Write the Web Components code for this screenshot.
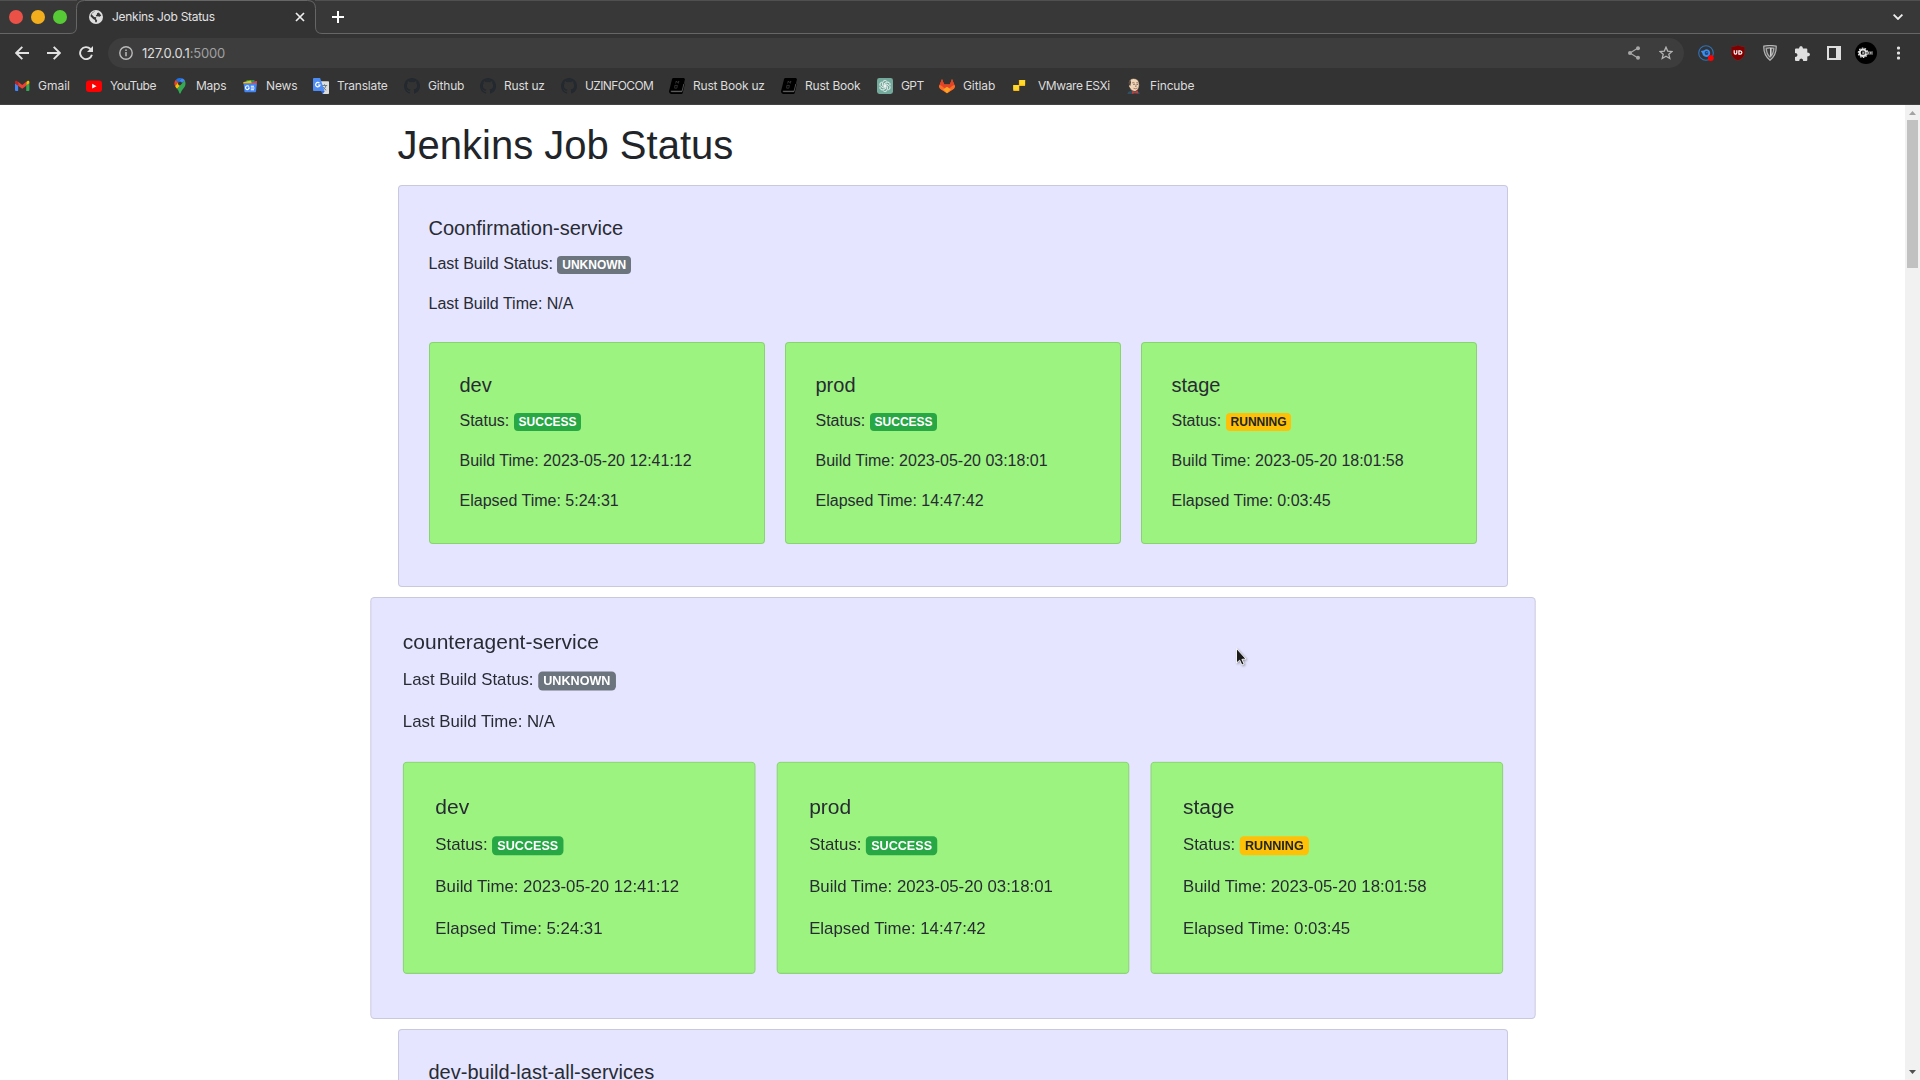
<!DOCTYPE html>
<html lang="en">
<head>
<meta charset="utf-8">
<title>Jenkins Job Status</title>
<style>
html,body{margin:0;height:100%;overflow:hidden;background:#fff}
</style>
</head>
<body>
<app-window></app-window>
<script>
const define = (name, html, setup) => {
  const t = document.createElement('template');
  t.innerHTML = html;
  customElements.define(name, class extends HTMLElement {
    connectedCallback() {
      if (this.shadowRoot) return;
      this.attachShadow({ mode: 'open' }).append(t.content.cloneNode(true));
      if (setup) setup.call(this, this.shadowRoot);
    }
  });
};

const octocat = '<path fill="#24292f" d="M8 0C3.58 0 0 3.58 0 8c0 3.54 2.29 6.53 5.47 7.59.4.07.55-.17.55-.38v-1.34c-2.23.48-2.7-1.07-2.7-1.07-.36-.92-.89-1.17-.89-1.17-.73-.5.05-.49.05-.49.81.06 1.23.83 1.23.83.72 1.23 1.88.87 2.34.67.07-.52.28-.88.51-1.08-1.78-.2-3.64-.89-3.64-3.95 0-.87.31-1.59.82-2.15-.08-.2-.36-1.02.08-2.12 0 0 .67-.21 2.2.82a7.6 7.6 0 0 1 4 0c1.53-1.04 2.2-.82 2.2-.82.44 1.1.16 1.92.08 2.12.51.56.82 1.27.82 2.15 0 3.07-1.87 3.75-3.65 3.95.29.25.54.73.54 1.48v2.19c0 .21.15.46.55.38A8 8 0 0 0 8 0z"/>';
const book = '<path fill="#000" d="M4.3 0H14.6Q16 .2 15.9 1.4L13.2 12.6H2.6Q1.4 12.8 1.6 13.6Q1.8 14.3 2.8 14.3H12.9L15.3 5.4L15.9 6L13.7 15Q13.4 15.9 12.4 15.9H2Q0 15.6 0 13.6Q0 12.9.4 11.8L3 1.2Q3.3.1 4.3 0z"/><path fill="none" stroke="#777" stroke-width=".6" d="M2.2 13.5H13L14.8 6"/><path fill="none" stroke="#444" stroke-width=".7" d="M6.6 5.5L7.3 3l1 1.5 1.6-1.4L9.3 5.6M5.8 7.4h2.6l-.6 2.8H5.7z"/>';
const petal = [0, 60, 120, 180, 240, 300].map(a => `<path d="M8 8.9L5.6 7.5V4.9A2.4 2.4 0 0 1 9.8 3.3" transform="rotate(${a} 8 8)"/>`).join('');
const ICONS = {
  gmail: '<g transform="translate(1 .8) scale(.9)"><path fill="#4285f4" d="M1 13.5h2.5V7.5L0 5v7.4q0 1.1 1 1.1z"/><path fill="#34a853" d="M12.5 13.5H15q1 0 1-1.1V5l-3.5 2.5z"/><path fill="#fbbc04" d="M12.5 3.5v4L16 5V3.8c0-1.6-1.5-2-2.4-1.2z"/><path fill="#ea4335" d="M3.5 7.6V3.4L8 6.8l4.5-3.4v4.2L8 11z"/><path fill="#c5221f" d="M0 3.8V5l3.5 2.6V3.4L2.4 2.6C1.4 1.9 0 2.3 0 3.8z"/></g>',
  youtube: '<rect y="2.4" width="16" height="11.6" rx="3" fill="#f00"/><path fill="#fff" d="M6.2 5.8v4.800l4.300-2.400z"/>',
  maps: '<path fill="#1a73e8" d="M9.8.3A5.6 5.6 0 0 0 3.6 2L6.2 4.2z"/><path fill="#ea4335" d="M3.6 2a5.5 5.5 0 0 0-.5 6L6.1 4.3z"/><path fill="#4285f4" d="M8 3.5q1.7 0 2 1.6L13 2.5A6 6 0 0 0 9.8.3L6 4.5Q6.8 3.5 8 3.5z"/><path fill="#fbbc04" d="M3.1 8Q3.8 9.4 5 10.8L9.7 7Q8 8.4 6.6 7 5.5 5.7 6.3 4.2z"/><path fill="#34a853" d="M5 10.8Q6.6 12.4 7.2 14.8 8 16.8 8.8 14.8C10 11.2 13.5 9.8 13.5 5.6Q13.5 3.8 12.8 2.4z"/>',
  news: '<path fill="#0c9d58" d="M4.500 2h8v5h-8z"/><path fill="#ea4335" d="M9 4l5.400-.9q.8 0 .6.900L14 9 9 8z"/><path fill="#fbbc04" d="M1.800 4L9 2.600l1.200 5H2.600L1.200 5q0-.8.600-1z"/><path fill="#4285f4" d="M2.400 5.200h11.800q.7 0 .6.700L14 13.600q-.1.700-.8.700H3.200q-.7 0-.8-.7L1.700 6q0-.7.700-.8z"/><path fill="none" stroke="#fff" stroke-width="1.100" d="M7 8.600A1.900 1.900 0 1 0 7.300 10H6M8.800 8.200h3.200M8.800 10h3.700M8.800 11.800h3.200"/>',
  translate: '<path fill="#ddd" d="M7 3.2h8.2q.8 0 .8.8v11.2q0 .8-.8.8H9.8z"/><path stroke="#6b7d88" fill="none" d="M9 7.5h5.2M11.5 6.3v1.2M13 7.6q-.8 2.800-3 4.600M10.200 9q1 2 3 3.200"/><path fill="#3367d6" d="M7.800 13h4l-2 3z"/><path fill="#4d8cf5" d="M.9 0h6.200L11.500 13H.9Q0 13 0 12V1q0-1 .9-1z"/><path fill="none" stroke="#fff" stroke-width="1.200" d="M6.500 5.200A2.200 2.200 0 1 0 7 7H5"/>',
  github: octocat, book,
  gpt: '<rect width="16" height="16" rx="2.400" fill="#74aa9c"/><g fill="none" stroke="#fff" stroke-width=".8">' + petal + '</g>',
  gitlab: '<path fill="#fc6d26" d="M0 8.500L3 .9 5.100 6.400h5.800L13 .9l3 7.600-1 2L8 15.200 1 10.500z"/><path fill="#e24329" d="M3 .9L5.100 6.400h5.800L13 .9l2.400 6L8 15.200.6 6.900z"/><path fill="#fc6d26" d="M.6 6.900q4 .4 7.400 8.300Q11.400 7.300 15.400 6.900L16 8.500 15 10.700 8 15.200 1 10.700 0 8.500z"/><path fill="#fca326" d="M4.200 11.300L8 8.800l3.800 2.500L8 15.200z"/>',
  vmware: '<g transform="translate(-.7 0)"><rect x="5.600" y="2" width="6.200" height="6" rx=".6" fill="#fdb913"/><rect x="6.200" y="2" width="5.600" height="4.800" rx=".5" fill="#ffda2b"/><rect y="7" width="6" height="6" rx=".6" fill="#fdb913"/><rect width="5.600" y="7" height="4.800" rx=".5" fill="#ffda2b"/></g>',
  jenkins: '<path fill="#2f5060" d="M1.500 16q0-2.500 3-3l7 .2q2.500.6 2.300 2.800z"/><path fill="#f1d5b8" stroke="#3b3028" stroke-width=".6" d="M3 7Q1.800 1 7.500.5 13.500.6 13.200 7q0 5-4.200 6.600Q5 13.200 4 10.200 2.400 9 3 7z"/><path fill="#51443c" d="M3 6.500Q2.500 3 4.500 1.800L5 4.500 4.300 8z"/><path fill="#333" d="M7.400 5.800h1.200v1H7.400zM10.600 5.800h1.200v1h-1.200z"/><path stroke="#7a4a3a" stroke-width=".6" fill="none" d="M6 5q1.200-1 2.600-.2M10.200 4.800q1-.8 2 0M9.800 6.500l.4 2h-1M7.500 10.300q2 1 4-.3"/><path fill="#d33833" d="M6 13l2.500 1 3.300-1.400.5 3-3.600-.8L6 16z"/>'
};

define('ui-icon', '<style>:host{display:block;flex:none}svg{display:block;width:100%;height:100%;overflow:visible}</style><svg viewBox="0 0 16 16"></svg>', function (r) {
  r.querySelector('svg').innerHTML = ICONS[this.getAttribute('name')] || '';
});

define('bookmark-item', `<style>
:host{display:flex;align-items:center;flex:none;height:20px;gap:8px;white-space:nowrap}
ui-icon{width:16px;height:16px}
span{padding-bottom:2px}
</style><span><slot></slot></span>`, function (r) {
  const i = document.createElement('ui-icon');
  i.setAttribute('name', this.getAttribute('icon'));
  r.insertBefore(i, r.querySelector('span'));
  this.style.width = this.getAttribute('advance') + 'px';
  this.style.letterSpacing = (this.getAttribute('track') || 0) + 'px';
});

define('bookmark-bar', `<style>
:host{display:flex;align-items:center;height:33px;box-sizing:border-box;padding:0 0 4px 14px;font:12px Inter,"Liberation Sans",sans-serif;color:#dcdcdc;border-bottom:1px solid #434343}
</style>
<bookmark-item icon="gmail" advance="72">Gmail</bookmark-item>
<bookmark-item icon="youtube" advance="86" track="-.45">YouTube</bookmark-item>
<bookmark-item icon="maps" advance="70" track="-.25">Maps</bookmark-item>
<bookmark-item icon="news" advance="71" track="-.1">News</bookmark-item>
<bookmark-item icon="translate" advance="91" track="-.18">Translate</bookmark-item>
<bookmark-item icon="github" advance="76" track="-.18">Github</bookmark-item>
<bookmark-item icon="github" advance="81" track="-.2">Rust uz</bookmark-item>
<bookmark-item icon="github" advance="108" track="-.62">UZINFOCOM</bookmark-item>
<bookmark-item icon="book" advance="112" track="-.22">Rust Book uz</bookmark-item>
<bookmark-item icon="book" advance="96" track="-.2">Rust Book</bookmark-item>
<bookmark-item icon="gpt" advance="62" track="-.6">GPT</bookmark-item>
<bookmark-item icon="gitlab" advance="75" track="-.08">Gitlab</bookmark-item>
<bookmark-item icon="vmware" advance="112" track="-.42">VMware ESXi</bookmark-item>
<bookmark-item icon="jenkins" advance="70" track="-.15">Fincube</bookmark-item>`);

define('tab-strip', `<style>
:host{display:flex;position:relative;height:34px;background:#383838;align-items:center;box-sizing:border-box;font:12px Inter,"Liberation Sans",sans-serif;color:#e2e2e2}
.edge{position:absolute;inset:0;width:1920px;height:34px}
.lights{display:flex;gap:8px;padding-left:9px;width:87px;box-sizing:border-box;position:relative}
.lights i{width:14px;height:14px;border-radius:50%}
.title{position:relative;width:183px;padding:0 0 1px 9px;white-space:nowrap;letter-spacing:-.28px}
svg{display:block;flex:none;position:relative}
.more{margin-left:auto;margin-right:17px}
</style>
<svg class="edge" viewBox="0 0 1920 34" fill="none" style="position:absolute"><path fill="#333" d="M66 34Q76.500 34 76.500 27V8.500Q76.500 .5 84.500 .5H307.500Q315.500 .5 315.500 8.500V27Q315.500 34 326 34z"/><path stroke="#666" d="M0 33.500H70Q76.500 33.500 76.500 27V8.500Q76.500 .5 84.500 .5H307.500Q315.500 .5 315.500 8.500V27Q315.500 33.500 322 33.500H1920"/><path stroke="#505050" d="M0 .5H77M315 .5H1920"/></svg>
<div class="lights"><i style="background:#ec5148"></i><i style="background:#f2ae1c"></i><i style="background:#57cb35"></i></div>
<svg style="margin-left:2px" width="14" height="14" viewBox="0 0 14 14"><circle cx="7" cy="7" r="7" fill="#dedede"/><path fill="#383838" d="M6.200 1.600Q3.800 2.200 2.400 4.300L5.200 7 7.300 7.200 6.900 9.200 8.200 10 7.700 12.200 6.300 12.300 6 10.100 4.200 8.900 1.500 6.300Q1.400 4 3.500 2.400 5 1.400 6.200 1.600zM8 3.200l1.800-.8 2.500 3.200L10.600 6.800 9 6.300 7.500 6.400 6.800 5.200 8 4.500z"/></svg>
<div class="title">Jenkins Job Status</div>
<svg width="10" height="10" viewBox="0 0 10 10"><path stroke="#eee" stroke-width="1.700" d="M1 1l8 8M9 1L1 9"/></svg>
<svg style="margin-left:27px" width="12" height="12" viewBox="0 0 12 12"><path stroke="#fff" stroke-width="2" d="M6 0v12M0 6h12"/></svg>
<svg class="more" width="10" height="6" viewBox="0 0 10 6"><path fill="none" stroke="#eee" stroke-width="1.800" d="M.6.6L5 5 9.400.6"/></svg>`);

define('address-bar', `<style>
:host{display:flex;align-items:center;width:1576px;height:30px;box-sizing:border-box;border-radius:15px;background:#3d3d3d;padding:0 11px;font:13px Inter,"Liberation Sans",sans-serif;color:#ddd}
svg{flex:none;display:block}
.url{margin-left:9px;flex:1;letter-spacing:-.2px}.url span{color:#a0a0a0}
</style>
<svg width="14" height="14" viewBox="0 0 14 14"><circle cx="7" cy="7" r="6.200" fill="none" stroke="#bbb" stroke-width="1.400"/><path stroke="#bbb" stroke-width="1.500" d="M7 6v4.300M7 3.400v1.500"/></svg>
<div class="url">127.0.0.1<span>:5000</span></div>
<svg width="12" height="14" viewBox="0 0 12 14" style="margin-right:19px"><path fill="none" stroke="#a8a8a8" stroke-width="1.200" d="M10 2L2 7l8 5"/><g fill="#a8a8a8"><circle cx="10" cy="2.200" r="2"/><circle cx="2" cy="7" r="2"/><circle cx="10" cy="11.800" r="2"/></g></svg>
<svg width="14" height="14" viewBox="0 0 14 14"><path fill="none" stroke="#b4b4b4" stroke-width="1.300" d="M7 1.200l1.700 3.900 4.300.4-3.200 2.800 1 4.200L7 10.300l-3.800 2.200 1-4.200L1 5.500l4.300-.4z"/></svg>`);

define('tool-bar', `<style>
:host{display:flex;align-items:center;height:38px;padding-left:15px}
svg{display:block;flex:none}
.acts{display:flex;align-items:center;margin-left:14px}
</style>
<svg width="14" height="14" viewBox="0 0 14 14"><path fill="none" stroke="#e2e2e2" stroke-width="1.900" d="M14 7H1.500M7.300.800L1.200 7l6.100 6.200"/></svg>
<svg style="margin-left:18px" width="14" height="14" viewBox="0 0 14 14"><path fill="none" stroke="#e2e2e2" stroke-width="1.900" d="M0 7h12.500M6.700.800L12.800 7l-6.100 6.200"/></svg>
<svg style="margin-left:18px" width="14" height="14" viewBox="0 0 14 14"><path fill="none" stroke="#e2e2e2" stroke-width="1.900" d="M12.900 8.700A6 6 0 1 1 11.500 3"/><path fill="#e2e2e2" d="M14 0v6H8z"/></svg>
<address-bar style="margin-left:15px"></address-bar>
<div class="acts">
<svg width="16" height="16" viewBox="0 0 16 16"><circle cx="8" cy="8" r="7.300" fill="none" stroke="#2e72b8" stroke-width="1.100"/><path fill="#3b8df0" d="M2.800 6Q6 6 8 4.200 12 4.300 12.200 8 12 11.800 8.200 12 4.700 11.600 4.300 8.300 3.600 7.500 2.800 6z"/><circle cx="8.500" cy="8" r="1.900" fill="#22466f"/><circle cx="8.900" cy="7.600" r=".7" fill="#3b8df0"/><circle cx="12.800" cy="13" r="2.900" fill="#f00"/></svg>
<svg style="margin-left:17px" width="14" height="16" viewBox="0 0 14 16"><path fill="#800000" stroke="#5c3030" stroke-width=".6" d="M7 0Q9.500 1.600 13.900 1.800V8Q13.700 13 7 15.800.3 13 .1 8V1.800Q4.500 1.600 7 0z"/><path fill="none" stroke="#fff" stroke-width="1.200" d="M3.200 5.200v2.600q0 1.400 1.300 1.400T5.800 7.800V5.200M7.900 5.800v3.400h1.200q1.800-.1 1.800-1.700T9.100 5.800z"/></svg>
<svg style="margin-left:18px" width="14" height="16" viewBox="0 0 14 16"><path fill="#4b4b4b" stroke="#b5b5b5" stroke-width="1.200" d="M.8 1.200Q7-.2 13.200 1.200 13.600 10 7 15.200.4 10 .8 1.200z"/><path fill="#3a3a3a" stroke="#aaa" stroke-width="1.300" d="M3.300 3.400Q7 2.500 10.700 3.400 10.500 9 7 12 3.500 9 3.300 3.400z"/><path fill="#d0d0d0" d="M7 3h1.600v7L7 11.500z"/></svg>
<svg style="margin-left:18px" width="15" height="15" viewBox="0 0 15 15"><path fill="#dedede" d="M4 2.500Q4.200 0 6 0t2 2.500h3.300q1 0 1 1V6.600Q15 6.700 15 8.600t-2.700 2V14q0 1-1 1H8.200q0-2.600-2-2.600t-2 2.600H1q-1 0-1-1V10.900q2.500-.1 2.500-2T0 6.900V3.500q0-1 1-1z"/></svg>
<svg style="margin-left:17px" width="14" height="14" viewBox="0 0 14 14"><path fill="#dedede" fill-rule="evenodd" d="M0 0h14v14H0zM2 2v10h7V2z"/></svg>
<svg style="margin-left:14px" width="22" height="22" viewBox="0 0 22 22"><circle cx="11" cy="11" r="11" fill="#000"/><path stroke="#777" stroke-width="3.200" d="M7 11h11"/><circle cx="8" cy="10.800" r="3.300" fill="none" stroke="#e4e4e4" stroke-width="2"/><circle cx="8" cy="10.800" r="4.700" fill="none" stroke="#ddd" stroke-width="1.100" stroke-dasharray="1.600 1.300"/><path stroke="#aaa" stroke-width="1.600" d="M8 10.800h9"/><path stroke="#333" stroke-width="1.600" stroke-dasharray="1 1.500" d="M9 11h9"/></svg>
<svg style="margin-left:20px" width="3" height="14" viewBox="0 0 3 14"><g fill="#e2e2e2"><circle cx="1.500" cy="2" r="1.600"/><circle cx="1.500" cy="7" r="1.600"/><circle cx="1.500" cy="12" r="1.600"/></g></svg>
</div>`);

define('status-badge', `<style>
:host{display:inline-block;padding:.25em .4em;font-size:75%;font-weight:700;line-height:1;text-align:center;white-space:nowrap;vertical-align:baseline;border-radius:4px;color:#fff;background:#6c757d}
:host([kind=success]){background:#28a745}
:host([kind=running]){background:#ffc107;color:#212529}
</style><slot></slot>`);

define('build-card', `<style>
:host{display:block;flex:1;box-sizing:border-box;border:1px solid rgba(0,0,0,.125);border-radius:4px;background:#9cf380;padding:30px}
h5{margin:0 0 12px;font-size:20px;line-height:24px;font-weight:500}
p{margin:0 0 16px}p:last-child{margin:0}
</style><h5></h5><p>Status: <status-badge></status-badge></p><p class="b"></p><p class="e"></p>`, function (r) {
  const a = n => this.getAttribute(n);
  r.querySelector('h5').textContent = a('name');
  const s = r.querySelector('status-badge');
  s.textContent = a('status');
  s.setAttribute('kind', a('status').toLowerCase());
  r.querySelector('.b').textContent = 'Build Time: ' + a('built');
  r.querySelector('.e').textContent = 'Elapsed Time: ' + a('elapsed');
});

define('service-card', `<style>
:host{display:block;box-sizing:border-box;min-height:402px;border:1px solid rgba(0,0,0,.125);border-radius:4px;background:#e5e5ff;padding:30px;margin-bottom:20px;color:#282b33}
:host([zoomed]){transform:scale(1.05)}
h5{margin:0 0 12px;font-size:20px;line-height:24px;font-weight:500}
p{margin:0 0 16px}
.row{display:flex;gap:20px;margin:26px 0 12px}
:host([collapsed]) .body{display:none}
</style><h5></h5><div class="body"><p>Last Build Status: <status-badge>UNKNOWN</status-badge></p><p style="margin:0">Last Build Time: N/A</p>
<div class="row">
<build-card name="dev" status="SUCCESS" built="2023-05-20 12:41:12" elapsed="5:24:31"></build-card>
<build-card name="prod" status="SUCCESS" built="2023-05-20 03:18:01" elapsed="14:47:42"></build-card>
<build-card name="stage" status="RUNNING" built="2023-05-20 18:01:58" elapsed="0:03:45"></build-card>
</div></div>`, function (r) {
  r.querySelector('h5').textContent = this.getAttribute('name');
  if (this.hasAttribute('collapsed')) r.querySelector('.body').remove();
});

define('job-page', `<style>
:host{display:block;flex:1;min-width:0;overflow:hidden;background:#fff;font:16px/24px "Liberation Sans",sans-serif;color:#212529}
main{display:block;width:1110px;margin:0 auto;padding:16px 15px 0}
h1{margin:0 0 16px;font-size:40px;line-height:48px;font-weight:400}
service-card[zoomed]{margin:20px 0}
</style><main><h1>Jenkins Job Status</h1>
<service-card name="Coonfirmation-service"></service-card>
<service-card name="counteragent-service" zoomed></service-card>
<service-card name="dev-build-last-all-services" collapsed></service-card></main>`);

define('scroll-bar', `<style>
:host{display:flex;flex-direction:column;align-items:center;justify-content:space-between;width:15px;flex:none;background:#f1f1f1;box-sizing:border-box}
.t{width:11px;height:148px;background:#c1c1c1;margin-bottom:auto}
svg{display:block;flex:none}
</style>
<svg width="15" height="15"><path fill="#a3a3a3" d="M4 10l3.500-4 3.500 4z"/></svg><div class="t"></div><svg width="15" height="15"><path fill="#505050" d="M4 5l3.500 4L11 5z"/></svg>`);

define('mouse-pointer', `<style>:host{display:block;position:absolute;left:1234px;top:646px;filter:drop-shadow(1px 1px 1px rgba(0,0,0,.35))}svg{display:block}</style>
<svg width="14" height="21" viewBox="0 0 14 21"><path fill="#1c1c1c" stroke="#fff" stroke-width=".9" d="M2.500 2.500V17l3.200-2.800 2.200 4.800 2.200-1-2.200-4.600 4.100-.4z"/></svg>`);

define('app-window', `<style>
:host{display:flex;flex-direction:column;width:1920px;height:1080px;background:#333;overflow:hidden;position:relative}
.view{flex:1;display:flex;min-height:0;background:#fff}
</style><tab-strip></tab-strip><tool-bar></tool-bar><bookmark-bar></bookmark-bar><div class="view"><job-page></job-page><scroll-bar></scroll-bar></div><mouse-pointer></mouse-pointer>`);
</script>
</body>
</html>
